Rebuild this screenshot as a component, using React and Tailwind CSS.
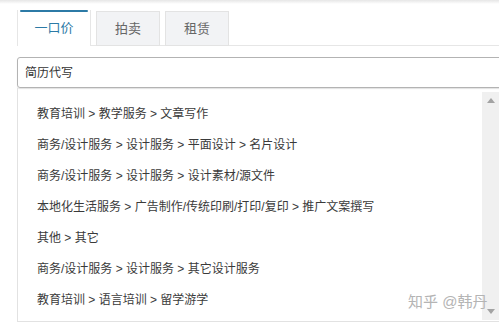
import React from 'react';

const items = [
  '教育培训 > 教学服务 > 文章写作',
  '商务/设计服务 > 设计服务 > 平面设计 > 名片设计',
  '商务/设计服务 > 设计服务 > 设计素材/源文件',
  '本地化生活服务 > 广告制作/传统印刷/打印/复印 > 推广文案撰写',
  '其他 > 其它',
  '商务/设计服务 > 设计服务 > 其它设计服务',
  '教育培训 > 语言培训 > 留学游学',
];

const font = { fontFamily: '"Liberation Sans", "Noto Sans CJK SC", sans-serif' };

export default function App() {
  return (
    <div className="relative w-[499px] h-[326px] overflow-hidden bg-white" style={font}>
      {/* top shade */}
      <div className="h-[4px] bg-gradient-to-b from-[#e6e6e6] to-white" />

      {/* tabs */}
      <div className="flex items-end pl-[17px] h-[42px]">
        <div className="w-[74px] h-[36px] bg-white border-l border-r border-[#e6e6e6] flex flex-col">
          <div className="mx-[2px] h-[2px] bg-[#2c7aa6] rounded-full" />
          <div className="flex-1 flex items-center justify-center text-[13px] text-[#2c7aa6] pb-[2px]">一口价</div>
        </div>
        <div className="w-[5px] border-b border-[#e6e6e6] self-stretch" />
        <div className="w-[64px] h-[35px] bg-[#f2f3f5] border border-[#e3e3e3] flex items-center justify-center text-[13px] text-[#666]">拍卖</div>
        <div className="w-[5px] border-b border-[#e6e6e6] self-stretch" />
        <div className="w-[64px] h-[35px] bg-[#f2f3f5] border border-[#e3e3e3] flex items-center justify-center text-[13px] text-[#666]">租赁</div>
        <div className="flex-1 border-b border-[#e6e6e6] self-stretch" />
      </div>

      {/* input */}
      <div className="mt-[11px] ml-[17px] w-[492px] h-[31px] border border-[#b3b3b3] rounded-[3px] shadow-[0_1px_1px_rgba(0,0,0,0.12)] flex items-center pl-[7px] text-[12px] text-[#333]">
        简历代写
      </div>

      {/* dropdown list */}
      <div className="ml-[17px] h-[234px] border-l border-b border-[#e2e2e2] flex">
        <div className="flex-1 pt-[10px] flex flex-col">
          {items.map((t) => (
            <div key={t} className="h-[31px] flex items-center pl-[19px] text-[12px] text-[#3a3a3a] whitespace-nowrap">
              {t}
            </div>
          ))}
        </div>
        <div className="w-[17px] mt-[4px] mb-[1px] bg-[#f0f0f0] flex flex-col items-center justify-between py-[6px]">
          <svg width="8" height="5" viewBox="0 0 8 5"><path d="M4 0 L8 5 L0 5 Z" fill="#a3a3a3" /></svg>
          <svg width="8" height="5" viewBox="0 0 8 5"><path d="M0 0 L8 0 L4 5 Z" fill="#a3a3a3" /></svg>
        </div>
      </div>

      {/* watermark */}
      <div className="absolute left-[408px] top-[291px] text-[15px] text-[#b4b4b4] whitespace-nowrap">知乎 @韩丹</div>
    </div>
  );
}
